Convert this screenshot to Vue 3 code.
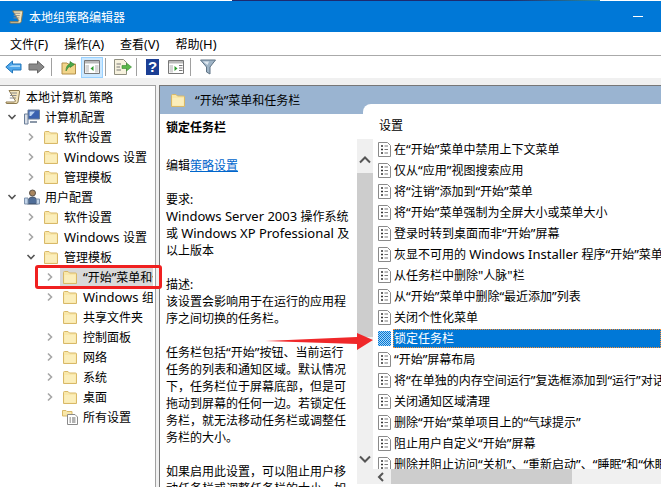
<script setup>
const tree = [
  { label: '计算机配置', depth: 0, open: true, icon: 'pc' },
  { label: '软件设置', depth: 1, twisty: true },
  { label: 'Windows 设置', depth: 1, twisty: true },
  { label: '管理模板', depth: 1, twisty: true },
  { label: '用户配置', depth: 0, open: true, icon: 'user' },
  { label: '软件设置', depth: 1, twisty: true },
  { label: 'Windows 设置', depth: 1, twisty: true },
  { label: '管理模板', depth: 1, open: true },
  { label: '“开始”菜单和任务栏', depth: 2, twisty: true, selected: true },
  { label: 'Windows 组件', depth: 2, twisty: true },
  { label: '共享文件夹', depth: 2 },
  { label: '控制面板', depth: 2, twisty: true },
  { label: '网络', depth: 2, twisty: true },
  { label: '系统', depth: 2, twisty: true },
  { label: '桌面', depth: 2, twisty: true },
  { label: '所有设置', depth: 2, icon: 'all' },
]

const description = [
  '要求:',
  'Windows Server 2003 操作系统',
  '或 Windows XP Professional 及',
  '以上版本',
  '',
  '描述:',
  '该设置会影响用于在运行的应用程',
  '序之间切换的任务栏。',
  '',
  '任务栏包括“开始”按钮、当前运行',
  '任务的列表和通知区域。默认情况',
  '下，任务栏位于屏幕底部，但是可',
  '拖动到屏幕的任何一边。若锁定任',
  '务栏，就无法移动任务栏或调整任',
  '务栏的大小。',
  '',
  '如果启用此设置，可以阻止用户移',
  '动任务栏或调整任务栏的大小。如',
]

const settings = [
  '在“开始”菜单中禁用上下文菜单',
  '仅从“应用”视图搜索应用',
  '将“注销”添加到“开始”菜单',
  '将“开始”菜单强制为全屏大小或菜单大小',
  '登录时转到桌面而非“开始”屏幕',
  '灰显不可用的 Windows Installer 程序“开始”菜单快捷方式',
  '从任务栏中删除"人脉"栏',
  '从“开始”菜单中删除“最近添加”列表',
  '关闭个性化菜单',
  '锁定任务栏',
  '“开始”屏幕布局',
  '将“在单独的内存空间运行”复选框添加到“运行”对话框',
  '关闭通知区域清理',
  '删除“开始”菜单项目上的“气球提示”',
  '阻止用户自定义“开始”屏幕',
  '删除并阻止访问“关机”、“重新启动”、“睡眠”和“休眠”命令',
]
const selectedSetting = 9
const menus = ['文件(F)', '操作(A)', '查看(V)', '帮助(H)']

// latin runs and quotes come out a little bigger than the CJK text
function runs(text) {
  return text
    .split(/([“”"]|[A-Za-z0-9][A-Za-z0-9 ()]*)/)
    .filter(Boolean)
    .map((t) => ({ t, lat: /^[“”"A-Za-z0-9]/.test(t) }))
}
</script>

<template>
  <div class="window">
    <svg width="0" height="0" class="defs">
      <defs>
        <symbol id="folder" viewBox="0 0 16 15">
          <path d="M1.5 2.5 Q1.5 1.5 2.5 1.5 H6 L7.5 3 H13.5 Q14.5 3 14.5 4 V13.5 H1.5 Z" fill="#f9e7a8" stroke="#d8b868" />
          <path d="M2.5 5 H13.5 V12.5 H2.5 Z" fill="#fbeebb" />
        </symbol>
        <symbol id="doc" viewBox="0 0 13 15">
          <path d="M.5 .5 H9.5 L12.5 3.5 V14.5 H.5 Z" fill="#fff" stroke="#8a8a8a" />
          <path d="M3 4 H5 M3 7.5 H5 M3 11 H5" stroke="#333" stroke-width="1.4" />
          <path d="M6.5 4 H10 M6.5 7.5 H10 M6.5 11 H10" stroke="#777" />
        </symbol>
        <symbol id="scroll" viewBox="0 0 16 16">
          <path d="M4 1.5 H14 Q15 1.5 14.5 3 L13 13 Q12.8 14.5 11 14.5 H2 Q.6 14.5 1 13 H9.5 L10.5 12 Z" fill="#f3e5bd" stroke="#8e7b4f" />
          <path d="M5.5 4 H12 M5 6.5 H11.5 M4.8 9 H11" stroke="#8a8a8a" />
        </symbol>
      </defs>
    </svg>

    <div class="desktop-strip"><span class="desktop-bit"></span></div>

    <header class="titlebar">
      <svg class="title-icon" width="15" height="16"><use href="#scroll" /></svg>
      <span class="title-text">本地组策略编辑器</span>
      <span class="minimize"></span>
    </header>

    <nav class="menubar">
      <span v-for="m in menus" :key="m">
        <span v-for="(r, i) in runs(m)" :key="i" :class="{ lat: r.lat }">{{ r.t }}</span>
      </span>
    </nav>

    <div class="toolbar">
      <svg class="tool back" width="17" height="14" viewBox="0 0 17 14">
        <path d="M.8 7 L7.5 1 V4 H16 V10 H7.5 V13 Z" fill="#4ea6ea" stroke="#2277bb" />
        <path d="M7 5.2 H15 V7 H4 Z" fill="#a8d8f8" />
      </svg>
      <svg class="tool forward" width="17" height="14" viewBox="0 0 17 14">
        <path d="M16.2 7 L9.5 1 V4 H1 V10 H9.5 V13 Z" fill="#8a8a8a" stroke="#666" />
      </svg>
      <i class="sep first"></i>
      <svg class="tool up" width="16" height="16" viewBox="0 0 16 16">
        <path d="M1 4 H6 L7 5 H14.5 V15 H1 Z" fill="#f2d58a" stroke="#b4904a" />
        <path d="M5 12 Q5 6 9 5 V2.5 L13.5 5.5 L9 8.5 V7 Q7 8 5 12 Z" fill="#4aa84a" stroke="#2d7d2d" stroke-width=".6" />
      </svg>
      <span class="tool-active">
        <svg width="16" height="14" viewBox="0 0 16 14">
          <path d="M.5 .5 H15.5 V13.5 H.5 Z" fill="#fff" stroke="#777" />
          <path d="M1 1 H15 V3.5 H1 Z" fill="#b9b9b9" />
          <path d="M1.5 5 H5 V12.5 H1.5 Z M11 5 H14.5 V12.5 H11 Z" fill="#d6d6d6" />
          <path d="M9.5 6 L6.5 8.5 L9.5 11 Z" fill="#2c9a2c" />
        </svg>
      </span>
      <i class="sep second"></i>
      <svg class="tool export" width="18" height="16" viewBox="0 0 18 16">
        <path d="M.5 .5 H9.5 L12.5 3.5 V15.5 H.5 Z" fill="#f7f2de" stroke="#8f8f80" />
        <path d="M2.5 5 H7 M2.5 8 H6 M2.5 11 H7" stroke="#777" />
        <path d="M8 6.5 H12.5 V4 L17.5 8 L12.5 12 V9.5 H8 Z" fill="#5ab84a" stroke="#3a8a30" stroke-width=".6" />
      </svg>
      <i class="sep"></i>
      <span class="help">?</span>
      <svg class="tool pane" width="16" height="14" viewBox="0 0 16 14">
        <path d="M.5 .5 H15.5 V13.5 H.5 Z" fill="#fff" stroke="#777" />
        <path d="M1 1 H15 V3.5 H1 Z" fill="#b9b9b9" />
        <path d="M1.5 5 H5 V12.5 H1.5 Z" fill="#d6d6d6" />
        <path d="M11 5.5 H14.5 M11 8 H14.5 M11 10.5 H14.5" stroke="#777" />
        <path d="M6.5 6 L9.5 8.5 L6.5 11 Z" fill="#2c9a2c" />
      </svg>
      <i class="sep last"></i>
      <svg class="tool filter" width="16" height="16" viewBox="0 0 16 16">
        <path d="M.5 1 H15.5 L10 8 V15 L6.5 13 V8 Z" fill="#9fb4c6" stroke="#5f7385" />
        <path d="M3 2.5 H9 L7.5 6 Z" fill="#dfe8f0" />
      </svg>
    </div>

    <main class="panes">
      <aside class="tree">
        <div class="row root">
          <svg class="row-icon" width="16" height="16"><use href="#scroll" /></svg>
          <span class="row-label">本地计算机 策略</span>
        </div>
        <div
          v-for="(node, i) in tree"
          :key="i"
          class="row"
          :class="'depth-' + node.depth"
        >
          <span class="twisty">
            <svg v-if="node.open" width="10" height="10" viewBox="0 0 10 10">
              <path d="M1.5 3 L5 6.5 L8.5 3" fill="none" stroke="#555" stroke-width="1.6" />
            </svg>
            <svg v-else-if="node.twisty" width="10" height="10" viewBox="0 0 10 10">
              <path d="M3 1.5 L6.5 5 L3 8.5" fill="none" stroke="#a6a6a6" stroke-width="1.6" />
            </svg>
          </span>
          <span class="node" :class="{ selected: node.selected }">
            <svg v-if="node.icon === 'pc'" class="row-icon" width="16" height="16" viewBox="0 0 16 16">
              <path d="M4 1 H15.5 V10 H4 Z" fill="#3a62b0" stroke="#6b7f99" />
              <path d="M5.5 2.5 H11 L7 7 H5.5 Z" fill="#bcd4f0" />
              <path d="M.5 5 H4 V15 H.5 Z" fill="#d9dee6" stroke="#6b7f99" />
              <path d="M6 12 H13 V14 H6 Z" fill="#8a97a8" />
            </svg>
            <svg v-else-if="node.icon === 'user'" class="row-icon" width="16" height="16" viewBox="0 0 16 16">
              <circle cx="8.5" cy="4" r="3" fill="#a9865f" stroke="#5d5348" />
              <path d="M3.5 15 Q3.5 8 8.5 8 Q13.5 8 13.5 15 Z" fill="#4f6d97" stroke="#3b4a60" />
              <path d="M.5 9 H4 V15 H.5 Z M12.5 10 H15.5 V15 H12.5 Z" fill="#c3d5ea" stroke="#7f93ad" />
            </svg>
            <svg v-else-if="node.icon === 'all'" class="row-icon" width="16" height="16" viewBox="0 0 16 16">
              <path d="M.5 1.5 H4 L5 2.5 H10 V7 H.5 Z" fill="#f9e7a8" stroke="#d8b868" />
              <path d="M5.5 5.5 H13 L15.5 8 V15.5 H5.5 Z" fill="#fff" stroke="#8a8a8a" />
              <path d="M7.5 9 H9 M7.5 11 H9 M7.5 13 H9 M10 9 H13.5 M10 11 H13.5 M10 13 H13.5" stroke="#666" />
            </svg>
            <svg v-else class="row-icon" width="16" height="15"><use href="#folder" /></svg>
            <span class="row-label">
              <span v-for="(r, j) in runs(node.label)" :key="j" :class="{ lat: r.lat }">{{ r.t }}</span>
            </span>
          </span>
        </div>
      </aside>

      <section class="detail">
        <div class="detail-head">
          <svg width="16" height="15"><use href="#folder" /></svg>
          <span>
            <span v-for="(r, j) in runs('“开始”菜单和任务栏')" :key="j" :class="{ lat: r.lat }">{{ r.t }}</span>
          </span>
        </div>
        <div class="detail-body">
          <div class="description">
            <h2>锁定任务栏</h2>
            <p>编辑<a>策略设置</a></p>
            <p>&nbsp;</p>
            <p v-for="(line, i) in description" :key="i">
              <template v-if="line">
                <span v-for="(r, j) in runs(line)" :key="j" :class="{ lat: r.lat }">{{ r.t }}</span>
              </template>
              <template v-else>&nbsp;</template>
            </p>
          </div>
          <div class="settings">
            <div class="settings-title">设置</div>
            <div class="settings-main">
              <div class="vscroll">
                <span class="vbtn">
                  <svg width="12" height="8" viewBox="0 0 12 8"><path d="M1 6.5 L6 1.5 L11 6.5" fill="none" stroke="#555" stroke-width="2" /></svg>
                </span>
                <span class="vthumb"></span>
                <span class="vbtn bottom">
                  <svg width="12" height="8" viewBox="0 0 12 8"><path d="M1 1.5 L6 6.5 L11 1.5" fill="none" stroke="#555" stroke-width="2" /></svg>
                </span>
              </div>
              <div class="settings-right">
                <ul class="settings-list">
                  <li v-for="(item, i) in settings" :key="i" :class="{ active: i === selectedSetting }">
                    <span v-if="i === selectedSetting" class="doc-checked"></span>
                    <svg v-else width="13" height="15"><use href="#doc" /></svg>
                    <span class="item-text">
                      <span v-for="(r, j) in runs(item)" :key="j" :class="{ lat: r.lat }">{{ r.t }}</span>
                    </span>
                  </li>
                </ul>
                <div class="hscroll">
                  <svg width="8" height="10" viewBox="0 0 8 10"><path d="M6 1 L2 5 L6 9" fill="none" stroke="#555" stroke-width="2" /></svg>
                  <span class="hthumb"></span>
                </div>
              </div>
            </div>
          </div>
        </div>
      </section>
    </main>

    <div class="tree-mark"></div>
    <svg class="red-arrow" width="110" height="22" viewBox="0 0 110 22">
      <path d="M0 11 L92 7 L92 3 L108 10 L92 20 L92 14 Z" fill="#f0282a" />
    </svg>
  </div>
</template>

<style>
html, body {
  margin: 0;
  background: #fff;
}
</style>

<style scoped>
.window {
  position: relative;
  display: flex;
  flex-direction: column;
  width: 661px;
  height: 487px;
  overflow: hidden;
  background: #f0f0f0;
  color: #000;
  font-family: "Noto Sans", "Noto Sans CJK SC", sans-serif;
  font-size: 12px;
}

.lat {
  font-size: 13px;
  line-height: 1;
}

.defs {
  position: absolute;
}

.desktop-strip {
  height: 1px;
  background: #fff;
  flex: none;
}

.desktop-bit {
  display: block;
  width: 368px;
  height: 1px;
  margin-left: 232px;
  background: linear-gradient(90deg, #1c2a70 0%, #1c2a70 75%, #2a8aa0 100%);
}

.titlebar {
  display: flex;
  flex: none;
  align-items: center;
  height: 31px;
  padding-left: 9px;
  background: #0078d7;
  color: #fff;
}

.title-text {
  margin-left: 5px;
  font-size: 12px;
}

.minimize {
  width: 10px;
  height: 1px;
  margin-left: auto;
  margin-right: 18px;
  background: #fff;
}

.menubar {
  display: flex;
  flex: none;
  gap: 16px;
  align-items: center;
  height: 23px;
  padding-left: 10px;
  background: #fff;
  border-bottom: 1px solid #aaa;
}

.toolbar {
  display: flex;
  flex: none;
  align-items: center;
  height: 22px;
  padding-left: 5px;
  background: #fff;
}

.tool {
  flex: none;
}

.forward {
  margin-left: 6px;
}

.sep {
  flex: none;
  width: 1px;
  height: 18px;
  margin: 0 9px 0 4px;
  background: #a0a0a0;
}

.sep.first {
  margin-left: 6px;
}

.sep.second {
  margin: 0 8px 0 2px;
}

.sep.last {
  margin-left: 6px;
}

.tool-active {
  display: flex;
  flex: none;
  align-items: center;
  justify-content: center;
  box-sizing: border-box;
  width: 22px;
  height: 21px;
  margin-left: 4px;
  background: #cce8ff;
  border: 1px solid #99d1ff;
}

.help {
  flex: none;
  width: 13px;
  height: 16px;
  background: #1c3f94;
  color: #fff;
  font-family: "Liberation Sans", sans-serif;
  font-size: 15px;
  font-weight: 700;
  line-height: 16px;
  text-align: center;
}

.pane {
  margin-left: 9px;
}

.panes {
  display: flex;
  flex: 1;
  gap: 3px;
  min-height: 0;
  margin-top: 7px;
}

.tree {
  flex: none;
  box-sizing: border-box;
  width: 156px;
  padding-top: 1px;
  overflow: hidden;
  background: #fff;
  border-top: 1px solid #a0a0a0;
  border-right: 1px solid #a0a0a0;
}

.row {
  display: flex;
  align-items: center;
  height: 20px;
  white-space: nowrap;
}

.root {
  padding-left: 5px;
}

.depth-0 {
  padding-left: 7px;
}

.depth-1 {
  padding-left: 26px;
}

.depth-2 {
  padding-left: 45px;
}

.twisty {
  display: flex;
  flex: none;
  align-items: center;
  width: 10px;
  margin-right: 5px;
}

.node {
  display: flex;
  align-items: center;
  height: 20px;
  padding-left: 2px;
  overflow: hidden;
}

.depth-2 .node {
  box-sizing: border-box;
  width: 93px;
}

.node.selected {
  background: #d9d9d9;
}

.row-icon {
  flex: none;
}

.row-label {
  flex: none;
  margin-left: 5px;
}

.detail {
  display: flex;
  flex: 1;
  flex-direction: column;
  min-width: 0;
  background: #fff;
  border-top: 1px solid #777;
  border-left: 1px solid #777;
}

.detail-head {
  display: flex;
  flex: none;
  gap: 9px;
  align-items: center;
  height: 28px;
  padding-left: 10px;
  background: #9ab4d1;
}

.detail-body {
  display: flex;
  flex: 1;
  min-height: 0;
}

.description {
  flex: none;
  box-sizing: border-box;
  width: 203px;
  padding: 5px 0 0 6px;
  overflow: hidden;
}

.description h2 {
  margin: 0 0 21px;
  font-size: 12px;
  font-weight: 700;
  line-height: 17px;
}

.description p {
  margin: 0;
  line-height: 17px;
  white-space: nowrap;
}

.description a {
  color: #0066cc;
  text-decoration: underline;
}

.settings {
  position: relative;
  display: flex;
  flex: 1;
  flex-direction: column;
  min-width: 0;
  margin-top: -10px;
  background: #fff;
  border-top-left-radius: 8px;
}

.settings-title {
  flex: none;
  height: 35px;
  padding-left: 16px;
  line-height: 43px;
}

.settings-main {
  display: flex;
  flex: none;
  height: 345px;
  margin-left: -6px;
}

.vscroll {
  display: flex;
  flex: none;
  flex-direction: column;
  width: 16px;
  background: #f0f0f0;
}

.vbtn {
  display: flex;
  flex: none;
  align-items: center;
  justify-content: center;
  box-sizing: border-box;
  height: 34px;
  padding-top: 8px;
}

.vbtn.bottom {
  height: 20px;
  margin-top: auto;
  margin-bottom: 15px;
  padding-top: 0;
}

.vthumb {
  flex: none;
  height: 164px;
  background: #cdcdcd;
}

.settings-right {
  flex: 1;
  min-width: 0;
}

.settings-list {
  height: 330px;
  margin: 0;
  padding: 0;
  overflow: hidden;
  list-style: none;
}

.settings-list li {
  display: flex;
  align-items: center;
  height: 21px;
  padding-left: 5px;
  white-space: nowrap;
}

.settings-list svg {
  flex: none;
}

.doc-checked {
  flex: none;
  width: 13px;
  height: 15px;
  background: repeating-conic-gradient(#0078d7 0 25%, #a8d4f4 0 50%) 0 0 / 2px 2px;
}

.item-text {
  box-sizing: border-box;
  flex: none;
  min-width: 268px;
  height: 19px;
  margin-left: 2px;
  padding: 0 1px;
  line-height: 19px;
}

.active .item-text {
  background: #0078d7;
  color: #fff;
  outline: 1px dotted #ff9030;
  outline-offset: -1px;
}

.hscroll {
  display: flex;
  gap: 6px;
  align-items: center;
  height: 15px;
  padding-left: 3px;
  background: #f0f0f0;
}

.hscroll svg {
  flex: none;
  margin-left: 1px;
}

.hthumb {
  width: 181px;
  height: 15px;
  background: #cdcdcd;
}

.tree-mark {
  position: absolute;
  top: 265px;
  left: 35px;
  box-sizing: border-box;
  width: 127px;
  height: 24px;
  border: 3px solid #f02020;
  border-radius: 3px;
}

.red-arrow {
  position: absolute;
  top: 330px;
  left: 265px;
}
</style>
